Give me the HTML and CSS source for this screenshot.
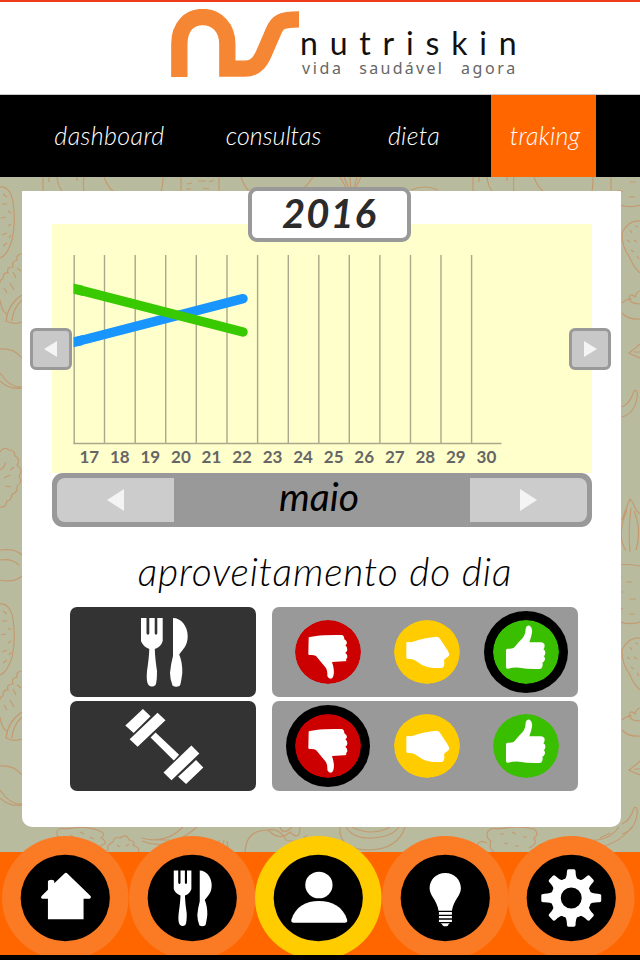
FILE: index.html
```html
<!DOCTYPE html>
<html lang="pt">

<head>
    <meta charset="UTF-8">
    <meta name="viewport" content="width=device-width, initial-scale=1.0">
    <title>nutriskin</title>
    <link rel="stylesheet" href="styles.css">
</head>

<body>
    <!-- shared icons -->
    <svg class="sprite" width="0" height="0">
        <symbol id="utensils" viewBox="0 0 50 72">
            <path d="M1 2H6.5V17.5Q8 20 9.3 17.5V2H14.7V17.5Q16 20 17.3 17.5V2H22.7V25Q21 31 14.8 33Q15 42 17 55Q17 66 15.5 69Q12 72 8.5 69Q6 66 7 55Q9 42 9.3 33Q2.5 30 1 25Z"/>
            <path d="M33 2C41 2 47.7 10 47.7 20C47.7 30 43 33 39.2 38.5Q42.5 46 42.3 57Q41 67 40 69.5Q36 72 32.5 69.5Q30 63 30 57Q31 47 33 40Z"/>
        </symbol>
        <symbol id="dumbbell" viewBox="0 0 244 236">
            <path d="M4 55L57 5L80 27L29 77ZM17 96L101 16L125 39L41 119ZM80 91L95 76L166 143L150 160ZM119 196L203 115L227 139L143 220ZM163 209L217 159L239 181L187 231Z"/>
        </symbol>
        <symbol id="down" viewBox="-99 -96 198 192">
            <ellipse rx="99" ry="96" fill="#cc0000"/>
            <path d="M-58 -42Q-59 -45 -54 -45L-36 -48Q-10 -52 42 -51Q49 -49 49 -38Q59 -32 56 -24Q54 -21 52 -20Q59 -15 58 -6Q57 -1 52 2Q59 8 58 15Q58 19 54 21Q58 29 48 28L12 30Q20 54 17 68Q15 80 7 80Q0 79 -2 72Q-1 54 -8 46L-36 12Q-42 8 -56 9Q-59 9 -59 5Z"/>
        </symbol>
        <symbol id="fist" viewBox="-99 -96 198 192">
            <ellipse rx="99" ry="96" fill="#ffcc00"/>
            <path d="M-62 -27Q-62 -31 -56 -30Q-42 -28 -28 -35Q-8 -42 28 -46Q35 -46 38 -41L55 -15Q66 0 67 8Q66 12 59 17Q50 21 51 27Q54 34 51 42Q48 49 42 48Q2 49 -16 38Q-32 28 -38 24Q-44 20 -58 21Q-62 21 -62 15Z"/>
        </symbol>
        <symbol id="up" viewBox="-99 -96 198 192">
            <ellipse rx="99" ry="96" fill="#3abf00"/>
            <path d="M-60 -5Q-60 -10 -55 -10Q-38 -8 -34 -15Q-26 -26 -10 -42Q-2 -52 -1 -70Q2 -81 11 -79Q20 -74 18 -58Q16 -46 10 -29L44 -29Q55 -28 56 -20Q56 -12 52 -8Q59 -5 58 4Q57 11 53 13Q59 17 56 25Q54 31 49 32Q51 36 49 44Q47 51 40 51Q4 52 -20 47Q-38 46 -54 50Q-60 51 -60 45Z"/>
        </symbol>
    </svg>

    <header class="header">
        <svg class="logo" viewBox="63 27 384 204">
            <path d="M88 231V132C88 78 120 51 158 51C202 51 232 85 232 132V206H285C320 206 334 180 345 153L370 95C382 65 395 58 447 58" fill="none" stroke="#f58634" stroke-width="49"/>
        </svg>
        <div class="brand">
            <h1>nutriskin</h1>
            <p>vida <span>saudável</span> agora</p>
        </div>
    </header>

    <nav class="menu">
        <a class="menu-dashboard">dashboard</a>
        <a class="menu-consultas">consultas</a>
        <a class="menu-dieta">dieta</a>
        <a class="menu-traking active">traking</a>
    </nav>

    <main class="main">
        <!-- vegetables drawn behind the card -->
        <svg class="doodles" viewBox="0 177 640 675">
            <defs>
                <g id="left-veg">
                    <path d="M0 187Q10 186 13 202Q16 224 12 240Q7 256 0 258M3 194l4 3M2 204h5M8 211l3 2M1 218l5 -1M8 226l3 -2M2 235l5 -2M3 246l4 -3M9 238l2 -3"/>
                    <path d="M22 254Q16 254 17 260Q11 261 13 267Q6 267 8 273Q3 272 3 279Q0 279 0 283M0 300Q2 312 7 314M22 295Q8 304 6 321Q14 325 22 322M22 300Q13 308 12 321M13 272l3 6M10 283l4 7M17 268l4 3M4 288l3 5"/>
                    <path d="M0 349Q14 348 22 358M0 373Q10 388 22 387M0 381Q9 390 22 388"/>
                    <path d="M0 452Q4 446 9 450Q15 450 15 456Q21 459 17 465Q24 470 19 476Q23 483 17 486Q18 493 12 494Q12 500 7 501Q6 508 0 507M0 470Q6 466 5 462M4 478l6 -3M5 486l6 1M10 470l4 -3"/>
                    <path d="M0 550Q15 548 22 555M0 560Q12 558 19 565M0 580Q14 583 22 576"/>
                </g>
                <g id="right-veg">
                    <path d="M611 149Q622 146 640 149M611 150V200Q624 210 640 205M616 160h6M626 165h6M617 175h6M630 182h6M618 190l5 2M629 197h6"/>
                    <path d="M640 221Q628 220 622 233Q622 247 629 256Q634 268 640 273M630 230l2 3M635 226l3 1M627 240l3 2M634 240l3 2M631 250l3 2M637 256l2 3"/>
                    <path d="M640 291Q637 291 635 297Q630 292 629 299Q631 304 640 304M622 303Q628 298 632 299M622 313Q628 320 640 319"/>
                    <path d="M640 344Q636 348 629 353Q634 356 640 358M634 352h6"/>
                    <path d="M622 407Q630 404 634 391Q638 388 637 398Q634 414 622 417"/>
                    <path d="M622 520Q628 503 630 499L633 503Q635 510 640 514M627 510Q616 535 626 551M631 508Q628 530 630 552M634 511Q642 530 636 550"/>
                </g>
            </defs>
            <use href="#left-veg"/>
            <use href="#left-veg" y="417"/>
            <use href="#right-veg"/>
            <use href="#right-veg" y="417"/>
            <!-- strip under the menu -->
            <path d="M43 177V191M49 177v5M57 177Q58 186 62 191M84 191Q83 184 84 177M77 177v4M104 177Q107 186 113 191M163 177Q163 186 161 191M181 177V191M219 177V191M198 181h8M187 184l5 -1M209 182l5 -2M186 189h5M203 188l6 1M241 177Q244 186 249 191M313 177Q308 185 301 191M340 177L348 191M344 177L350 191M350 177L351 191M357 177L353 191M361 177L354 191M411 190Q425 184 438 190M473 177V191M479 177v5M487 177Q488 186 492 191M514 191Q513 184 514 177M507 177v4M534 177Q537 186 543 191M593 177Q593 186 592 191"/>
            <!-- strip above the footer -->
            <path d="M57 831Q56 838 62 840Q64 847 71 848M57 831Q60 827 66 829M66 829Q85 825 100 831Q107 834 101 838Q110 843 100 846M70 835l4 2M80 832l4 2M90 837l4 2M78 843l5 1M92 845h5M67 841l4 2"/>
            <path d="M108 851Q106 845 113 842Q114 836 120 838Q127 833 129 840Q136 841 133 845Q141 848 138 852M117 845l3 2M126 846l3 -2"/>
            <path d="M142 838Q165 845 183 827M142 841Q168 852 197 827M150 840h20M190 852Q197 846 212 843M215 847l5 -7M222 849l2 -9M228 849l-1 -8"/>
            <path d="M245 852Q246 830 268 830Q280 828 286 840Q300 844 307 835M268 830Q280 842 290 832Q300 842 300 827M280 827Q283 836 292 827"/>
            <path d="M340 827Q338 850 370 850Q398 849 405 827M346 827Q353 839 372 838Q392 837 399 827M352 827Q372 837 390 827"/>
            <path d="M477 845Q480 839 487 843M488 831Q485 838 491 841Q488 848 494 852M488 831Q492 827 498 829Q518 825 534 829Q540 834 534 838Q538 844 529 848M500 834h4M512 832l4 2M523 837h4M504 843l4 1M515 846h4M536 848Q540 842 547 845Q548 837 556 842M575 838Q605 846 619 827M580 847Q612 852 632 827M600 838l10 -5"/>
        </svg>

        <section class="card">
            <div class="year">2016</div>

            <div class="chart">
                <svg class="plot" viewBox="0 0 540 225">
                    <g stroke="#a8a88a" stroke-width="1.4">
                        <path d="M22.2 31V220M52.5 31V220M83.2 31V220M113.7 31V220M144.3 31V220M175 31V220M205.6 31V220M236.3 31V220M266.8 31V220M297.3 31V220M327.9 31V220M358.5 31V220M389 31V220M419.6 31V220"/>
                        <path d="M21.5 219.5H449.5"/>
                    </g>
                    <path d="M21.5 113.3L31 110.9V121L21.5 123.3Z" fill="#1895ff"/>
                    <path d="M27 117L191 74.7" stroke="#1895ff" stroke-width="9.5" stroke-linecap="round"/>
                    <path d="M21.5 59.5L31 61.8V72L21.5 69.7Z" fill="#38c900"/>
                    <path d="M27 65.9L191 108" stroke="#38c900" stroke-width="9.5" stroke-linecap="round"/>
                </svg>
                <div class="days">
                    <span>17</span><span>18</span><span>19</span><span>20</span><span>21</span><span>22</span><span>23</span><span>24</span><span>25</span><span>26</span><span>27</span><span>28</span><span>29</span><span>30</span>
                </div>
                <button class="arrow prev"><svg viewBox="0 0 14 16"><path d="M13 0V16L0 8Z"/></svg></button>
                <button class="arrow next"><svg viewBox="0 0 14 16"><path d="M1 0V16L14 8Z"/></svg></button>
            </div>

            <div class="month">
                <button class="month-prev"><svg viewBox="0 0 17 22"><path d="M17 0V22L0 11Z"/></svg></button>
                <span>maio</span>
                <button class="month-next"><svg viewBox="0 0 17 22"><path d="M0 0V22L17 11Z"/></svg></button>
            </div>

            <h2>aproveitamento do dia</h2>

            <div class="rating">
                <div class="tile"><svg class="icon-food"><use href="#utensils"/></svg></div>
                <div class="votes">
                    <svg class="vote"><use href="#down"/></svg>
                    <svg class="vote"><use href="#fist"/></svg>
                    <svg class="vote selected"><use href="#up"/></svg>
                </div>
            </div>
            <div class="rating">
                <div class="tile"><svg class="icon-gym"><use href="#dumbbell"/></svg></div>
                <div class="votes">
                    <svg class="vote selected"><use href="#down"/></svg>
                    <svg class="vote"><use href="#fist"/></svg>
                    <svg class="vote"><use href="#up"/></svg>
                </div>
            </div>
        </section>
    </main>

    <footer class="footer">
        <svg class="tab" viewBox="-190 -186 380 372">
            <ellipse class="ring" rx="190" ry="186"/>
            <ellipse class="disc" rx="134" ry="130"/>
            <path d="M-3 -73Q2 -78 7 -73L76 -6Q79 1 73 2H55V64H-52V2H-69Q-75 0 -71 -6L-52 -25V-50Q-51 -55 -42 -55Q-33 -55 -33 -50V-44Z"/>
        </svg>
        <svg class="tab" viewBox="-190 -186 380 372">
            <ellipse class="ring" rx="190" ry="186"/>
            <ellipse class="disc" rx="134" ry="130"/>
            <use href="#utensils" x="-58" y="-88" width="122" height="176"/>
        </svg>
        <svg class="tab current" viewBox="-190 -186 380 372">
            <ellipse class="ring" rx="190" ry="186"/>
            <ellipse class="disc" rx="134" ry="130"/>
            <ellipse cx="2" cy="-39" rx="41" ry="40"/>
            <path d="M-81 66C-69 26 -37 9 2 9S75 26 87 66Q88 74 80 74H-74Q-82 74 -81 66Z"/>
        </svg>
        <svg class="tab" viewBox="-190 -186 380 372">
            <ellipse class="ring" rx="190" ry="186"/>
            <ellipse class="disc" rx="134" ry="130"/>
            <path d="M0 -75C28 -75 47 -54 47 -29C47 -7 26 5 20 38H-20C-26 5 -47 -7 -47 -29C-47 -54 -28 -75 0 -75Z"/>
            <path d="M-19 42H20V50H-19ZM-19 54H20V61H-19ZM-19 65H20V72H-19ZM-14 76H14Q9 79 8 83Q0 87 -7 83Q-9 79 -14 76Z"/>
        </svg>
        <svg class="tab" viewBox="-190 -186 380 372">
            <ellipse class="ring" rx="190" ry="186"/>
            <ellipse class="disc" rx="134" ry="130"/>
            <circle r="46" fill="none" stroke="#fff" stroke-width="29"/>
            <path d="M-20 -54Q-13 -62 -13 -80Q-13 -86 -8 -86H8Q13 -86 13 -80Q13 -62 20 -54Z"/>
            <path d="M-20 -54Q-13 -62 -13 -80Q-13 -86 -8 -86H8Q13 -86 13 -80Q13 -62 20 -54Z" transform="rotate(45)"/>
            <path d="M-20 -54Q-13 -62 -13 -80Q-13 -90 -8 -90H8Q13 -90 13 -80Q13 -62 20 -54Z" transform="rotate(90)"/>
            <path d="M-20 -54Q-13 -62 -13 -80Q-13 -86 -8 -86H8Q13 -86 13 -80Q13 -62 20 -54Z" transform="rotate(135)"/>
            <path d="M-20 -54Q-13 -62 -13 -80Q-13 -86 -8 -86H8Q13 -86 13 -80Q13 -62 20 -54Z" transform="rotate(180)"/>
            <path d="M-20 -54Q-13 -62 -13 -80Q-13 -86 -8 -86H8Q13 -86 13 -80Q13 -62 20 -54Z" transform="rotate(225)"/>
            <path d="M-20 -54Q-13 -62 -13 -80Q-13 -90 -8 -90H8Q13 -90 13 -80Q13 -62 20 -54Z" transform="rotate(270)"/>
            <path d="M-20 -54Q-13 -62 -13 -80Q-13 -86 -8 -86H8Q13 -86 13 -80Q13 -62 20 -54Z" transform="rotate(315)"/>
        </svg>
    </footer>
</body>

</html>
```
FILE: styles.css
```css
*
{
    box-sizing: border-box;
}

body
{
    margin: 0;
    width: 640px;
    height: 960px;
    overflow: hidden;
    background-color: black;
    font-family: Lato, "Open Sans", sans-serif;
}

h1, h2, p
{
    margin: 0;
    font-weight: normal;
}

button
{
    padding: 0;
    border: 0;
}

.sprite
{
    display: block;
}

/* header */
.header
{
    display: flex;
    height: 95px;
    padding: 7px 0 0 171px;
    border-top: 2px solid #ee3c1a;
    border-bottom: 1px solid #c8c8c8;
    background-color: white;
}

.logo
{
    width: 128px;
    height: 68px;
}

.brand
{
    padding: 16px 0 0 1px;
    white-space: nowrap;
}

.brand h1
{
    font-size: 32px;
    line-height: 36px;
    letter-spacing: 11.8px;
    color: #111;
}

.brand p
{
    padding-left: 2px;
    font-family: "Noto Sans", sans-serif;
    font-size: 16px;
    line-height: 14px;
    letter-spacing: 2.6px;
    color: #666;
}

.brand span
{
    margin: 0 10px 0 9px;
    letter-spacing: 2.3px;
}

/* menu */
.menu
{
    display: flex;
    height: 82px;
    background-color: black;
}

.menu a
{
    color: white;
    font-size: 25px;
    font-style: italic;
    font-weight: 300;
    line-height: 81px;
    text-align: center;
    white-space: nowrap;
}

.menu-dashboard
{
    width: 219px;
    letter-spacing: 0.4px;
}

.menu-consultas
{
    width: 109px;
}

.menu-dieta
{
    width: 163px;
    padding-left: 9px;
    letter-spacing: 0.3px;
}

.menu-traking
{
    width: 105px;
    padding-left: 3px;
    letter-spacing: 0.2px;
}

.menu .active
{
    background-color: #ff6600;
}

/* content */
.main
{
    position: relative;
    height: 675px;
    padding: 14px 19px 0 22px;
    background-color: #b9bb9f;
}

.doodles
{
    position: absolute;
    top: 0;
    left: 0;
    width: 640px;
    height: 675px;
    fill: none;
    stroke: #c49a70;
    stroke-width: 1.2;
}

.card
{
    position: relative;
    height: 636px;
    padding: 33px 29px 0 30px;
    background-color: white;
    border-radius: 0 0 10px 10px;
}

.year
{
    position: absolute;
    top: -4px;
    left: 226px;
    z-index: 1;
    width: 163px;
    height: 55px;
    border: 4px solid #999;
    border-radius: 9px;
    background-color: white;
    color: #2b2b2b;
    font-size: 40px;
    font-style: italic;
    font-weight: bold;
    line-height: 45px;
    letter-spacing: 1px;
    text-align: center;
}

.chart
{
    position: relative;
    height: 249px;
    background-color: #ffffcc;
}

.plot
{
    display: block;
    width: 540px;
    height: 225px;
}

.days
{
    display: flex;
    padding-left: 22px;
}

.days span
{
    width: 30.55px;
    color: #666;
    font-size: 17px;
    font-weight: bold;
    line-height: 15px;
    text-align: center;
}

.arrow
{
    position: absolute;
    top: 104px;
    display: flex;
    align-items: center;
    justify-content: center;
    width: 42px;
    height: 42px;
    border: 3px solid #999;
    border-radius: 6px;
    background-color: #c8c8c8;
}

.arrow svg
{
    width: 14px;
    height: 16px;
    fill: #f4f4f4;
}

.prev
{
    left: -22px;
}

.next
{
    right: -19px;
}

.month
{
    display: flex;
    height: 54px;
    border: 5px solid #999;
    border-radius: 11px;
    background-color: #999;
}

.month button
{
    display: flex;
    align-items: center;
    justify-content: center;
    width: 117px;
    background-color: #ccc;
}

.month svg
{
    width: 17px;
    height: 22px;
    fill: #f4f4f4;
}

.month .month-prev
{
    border-radius: 8px 0 0 8px;
}

.month .month-next
{
    border-radius: 0 8px 8px 0;
}

.month span
{
    flex: 1;
    padding-right: 6px;
    font-size: 39px;
    font-style: italic;
    line-height: 37px;
    text-align: center;
}

h2
{
    height: 80px;
    padding-left: 6px;
    font-size: 39px;
    font-style: italic;
    font-weight: 300;
    line-height: 88px;
    letter-spacing: 0.85px;
    text-align: center;
    white-space: nowrap;
}

.rating
{
    display: flex;
    gap: 16px;
    height: 90px;
    margin: 0 0 4px 18px;
}

.tile
{
    display: flex;
    align-items: center;
    justify-content: center;
    width: 186px;
    padding-left: 3px;
    border-radius: 7px;
    background-color: #333;
    fill: white;
}

.icon-food
{
    width: 50px;
    height: 72px;
}

.icon-gym
{
    width: 81px;
    height: 79px;
}

.votes
{
    display: flex;
    align-items: center;
    justify-content: space-between;
    width: 306px;
    padding: 0 10px 0 14px;
    border-radius: 7px;
    background-color: #999;
    fill: white;
}

.vote
{
    width: 84px;
    height: 82px;
    padding: 9px;
    border-radius: 50%;
}

.selected
{
    background-color: black;
}

/* footer */
.footer
{
    position: relative;
    display: flex;
    height: 119px;
    margin-top: -16px;
    padding-left: 2.2px;
    overflow: hidden;
    background: linear-gradient(transparent 16px, #ff6600 16px);
}

.tab
{
    flex: none;
    width: 126.5px;
    height: 124px;
    fill: white;
}

.ring
{
    fill: #fb7a24;
}

.disc
{
    fill: black;
}

.current .ring
{
    fill: #ffcc00;
}
```
